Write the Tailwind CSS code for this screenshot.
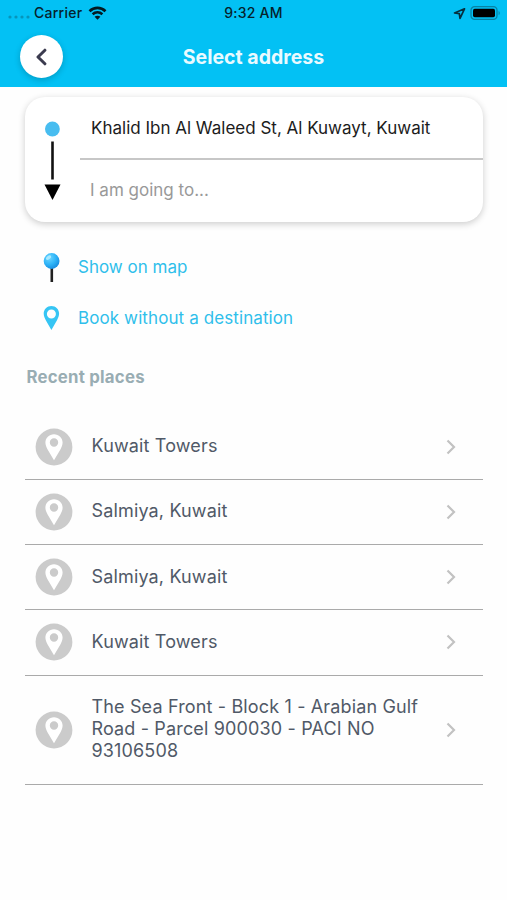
<!DOCTYPE html>
<html lang="en">
<head>
<meta charset="utf-8">
<title>Select address</title>
<script src="https://cdn.jsdelivr.net/npm/@tailwindcss/browser@4"></script>
</head>
<body class="bg-[#fefefe] font-['Inter',sans-serif]">
<svg class="hidden">
  <symbol id="place" viewBox="0 0 38 38"><circle cx="19" cy="19" r="18.4" fill="#cbcbcb"/><path fill="#fff" fill-rule="evenodd" d="M19 6.2c-4.9 0-8.6 3.700-8.600 8.400 0 2.400 1 4.500 2.200 6.900L19 32.200l6.400-10.700c1.200-2.400 2.200-4.500 2.200-6.900 0-4.700-3.700-8.400-8.600-8.400zm0 4.100a4.200 4.200 0 1 1 0 8.400 4.200 4.200 0 0 1 0-8.400z"/></symbol>
  <symbol id="next" viewBox="0 0 12 18"><path d="M2.500 2.500 9 9l-6.500 6.500" fill="none" stroke="#c2c2c2" stroke-width="2.200"/></symbol>
</svg>
<main class="flex h-[900px] w-[507px] flex-col overflow-hidden">
  <header class="h-[87px] shrink-0 bg-[#03c1f4]">
    <div class="grid h-[26px] grid-cols-3 items-center text-[14px] font-medium tracking-[0.25px] text-[#06222c]">
      <div class="flex items-center pl-[8px]">
        <svg class="mt-[8px] mr-[4px] h-[4px] w-[22px]" viewBox="0 0 22 4" fill="#0794ba"><circle cx="2" cy="2" r="1.600"/><circle cx="8" cy="2" r="1.600"/><circle cx="14" cy="2" r="1.600"/><circle cx="20" cy="2" r="1.600"/></svg>
        <span class="w-[48px] pb-[2px]">Carrier</span>
        <svg class="ml-[6px] h-[14px] w-[19px]" viewBox="0 0 19 14" fill="none" stroke="#041a22"><path stroke-width="2.700" d="M1.500 5.200c4.600-4.400 11.400-4.400 16 0"/><path stroke-width="2.500" d="M4.600 8.300c2.900-2.600 6.900-2.600 9.800 0"/><path fill="#041a22" stroke="none" d="M6.600 10.800c1.600-1.500 4.200-1.500 5.800 0L9.500 13.700z"/></svg>
      </div>
      <div class="pb-[2px] text-center">9:32 AM</div>
      <div class="flex items-center justify-end gap-[4px] pr-[6px]">
        <svg class="h-[13px] w-[13px]" viewBox="0 0 13 13" fill="none" stroke="#06303e" stroke-width="1.700" stroke-linejoin="round"><path d="M11.500 1.800 1.500 6l4.800.6.700 4.800z"/></svg>
        <svg class="h-[14px] w-[31px]" viewBox="0 0 31 14"><rect x="1" y=".7" width="26" height="12.600" rx="3.600" fill="none" stroke="#0783a5" stroke-width="1.300"/><rect x="3" y="2.700" width="22" height="8.600" rx="1.700"/><path d="M28.600 4.900c1.500.6 1.500 3.600 0 4.200z" fill="#0783a5"/></svg>
      </div>
    </div>
    <div class="flex h-[61px] items-center pl-[20px]">
      <button class="flex size-[43px] items-center justify-center rounded-full bg-white shadow-[0_2px_6px_rgba(0,0,0,0.2)]" aria-label="Back">
        <svg class="h-[18px] w-[12px]" viewBox="0 0 12 18" fill="none" stroke="#3b3b4f" stroke-width="3" stroke-linecap="round" stroke-linejoin="round"><path d="M8.900 2.200 2 9l6.900 6.800"/></svg>
      </button>
      <h1 class="w-[381px] pt-[2px] text-center text-[19.5px] font-bold text-[#eafaff]">Select address</h1>
    </div>
  </header>

  <section class="mt-[10px] ml-[25px] flex h-[125px] w-[458px] shrink-0 rounded-[20px] bg-white shadow-[0_2px_7px_rgba(0,0,0,0.2)]">
    <svg class="h-[125px] w-[55px]" viewBox="0 0 55 125"><circle cx="27.400" cy="32" r="7.400" fill="#48bdf0"/><path d="M27.500 44.500v38" stroke="#111" stroke-width="2.600"/><path d="M19.500 87.500h16l-8 15.500z"/></svg>
    <div class="flex flex-1 flex-col">
      <div class="h-[63px] border-b-2 border-[#c7c7c7] pt-[19px] pl-[11px] text-[17px] leading-[24px] whitespace-nowrap text-[#1c1c1c]">Khalid Ibn Al Waleed St, Al Kuwayt, Kuwait</div>
      <div class="pt-[18px] pl-[10px] text-[17px] leading-[24px] text-[#999]">I am going to...</div>
    </div>
  </section>

  <nav class="mt-[21px] ml-[41px] shrink-0 text-[17px] text-[#2fbfeb]">
    <div class="flex h-[50px] items-center">
      <svg class="mr-[16px] h-[32px] w-[21px]" viewBox="0 0 21 32"><defs><radialGradient id="ball" cx=".35" cy=".3" r=".75"><stop offset="0" stop-color="#6fd6ff"/><stop offset=".55" stop-color="#2fb5f8"/><stop offset="1" stop-color="#168bdf"/></radialGradient></defs><path d="M10.800 16v14" stroke="#202020" stroke-width="2.600"/><circle cx="10.600" cy="9" r="7.900" fill="url(#ball)"/><ellipse cx="7.500" cy="5.600" rx="3" ry="1.700" transform="rotate(-35 7.500 5.600)" fill="#a8e9ff"/></svg>
      <span>Show on map</span>
    </div>
    <div class="flex h-[51px] items-center">
      <svg class="mr-[16px] h-[26px] w-[21px]" viewBox="0 0 21 26"><path fill="#36c5f4" fill-rule="evenodd" d="M10.400 0C6 0 2.700 3.400 2.700 7.600c0 2.300 1 4.500 2.100 6.700l5.600 9.700 5.600-9.700c1.100-2.200 2.100-4.400 2.100-6.700C18.100 3.400 14.800 0 10.400 0zm0 3.500a4.500 4.500 0 1 1 0 9 4.500 4.500 0 0 1 0-9z"/></svg>
      <span class="tracking-[0.1px]">Book without a destination</span>
    </div>
  </nav>

  <h2 class="mt-[21px] ml-[26.500px] h-[24px] shrink-0 text-[16.800px] leading-[24px] font-bold tracking-[0.22px] text-[#99adb3]">Recent places</h2>

  <ul class="mt-[25.500px] ml-[25px] w-[458px] text-[18px] leading-[22px] tracking-[0.15px] text-[#505967]">
    <li class="flex h-[65.250px] items-center border-b-[1.500px] border-[#aaa] pl-[9.500px]"><svg class="mr-[19px] size-[38px]"><use href="#place"/></svg><span class="w-[340px] pb-[2px]">Kuwait Towers</span><svg class="ml-[13px] h-[18px] w-[12px]"><use href="#next"/></svg></li>
    <li class="flex h-[65.250px] items-center border-b-[1.500px] border-[#aaa] pl-[9.500px]"><svg class="mr-[19px] size-[38px]"><use href="#place"/></svg><span class="w-[340px] pb-[1px]">Salmiya, Kuwait</span><svg class="ml-[13px] h-[18px] w-[12px]"><use href="#next"/></svg></li>
    <li class="flex h-[65.250px] items-center border-b-[1.500px] border-[#aaa] pl-[9.500px]"><svg class="mr-[19px] size-[38px]"><use href="#place"/></svg><span class="w-[340px] pb-[1px]">Salmiya, Kuwait</span><svg class="ml-[13px] h-[18px] w-[12px]"><use href="#next"/></svg></li>
    <li class="flex h-[65.250px] items-center border-b-[1.500px] border-[#aaa] pl-[9.500px]"><svg class="mr-[19px] size-[38px]"><use href="#place"/></svg><span class="w-[340px] pb-[1px]">Kuwait Towers</span><svg class="ml-[13px] h-[18px] w-[12px]"><use href="#next"/></svg></li>
    <li class="flex h-[109.500px] items-center border-b-[1.500px] border-[#aaa] pl-[9.500px]"><svg class="mr-[19px] size-[38px]"><use href="#place"/></svg><span class="w-[340px] pb-[1px] whitespace-nowrap">The Sea Front - Block 1 - Arabian Gulf<br>Road - Parcel 900030 - PACI NO<br>93106508</span><svg class="ml-[13px] h-[18px] w-[12px]"><use href="#next"/></svg></li>
  </ul>
</main>
</body>
</html>
